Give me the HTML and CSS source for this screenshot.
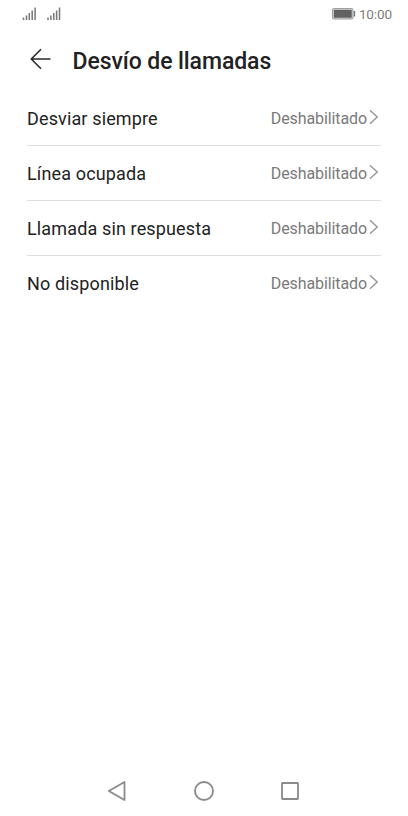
FILE: index.html
```html
<!DOCTYPE html>
<html lang="es">
<head>
<meta charset="utf-8">
<title>Desvío de llamadas</title>
<link rel="stylesheet" href="styles.css">
</head>
<body>
<div class="screen">
  <div class="status">
    <svg class="signals" width="40" height="14" viewBox="0 0 40 14"><path d="M1.500 10.500v2.500M4.500 8.500v4.500M7.300 6v7M10.200 3.500v9.500M13.100 .5v12.500M26 10.500v2.500M28.900 8.500v4.500M31.800 6v7M34.600 3.500v9.500M37.500 .5v12.500"/></svg>
    <div class="right">
      <svg width="24" height="12" viewBox="0 0 24 12"><rect x=".6" y=".6" width="20.300" height="10.300" rx="1.500" fill="#fff" stroke="#a0a0a0" stroke-width="1.200"/><rect x="1.700" y="1.700" width="18.100" height="8.100" fill="#626262"/><path d="M22.400 3v5.500" stroke="#777" stroke-width="1.500"/></svg>
      <span class="time">10:00</span>
    </div>
  </div>
  <header class="header">
    <svg width="22" height="22" viewBox="0 0 22 22"><path d="M20.500 11H1.500M11 1.300L1.300 11l9.700 9.700" fill="none" stroke="#2a2a2a" stroke-width="1.600"/></svg>
    <h1>Desvío de llamadas</h1>
  </header>
  <main class="list">
    <div class="row"><span class="label">Desviar siempre</span><span class="value">Deshabilitado</span><svg class="chevron" viewBox="0 0 10 16"><path d="M1 1.200L8.200 8 1 14.800"/></svg></div>
    <div class="row"><span class="label">Línea ocupada</span><span class="value">Deshabilitado</span><svg class="chevron" viewBox="0 0 10 16"><path d="M1 1.200L8.200 8 1 14.800"/></svg></div>
    <div class="row"><span class="label">Llamada sin respuesta</span><span class="value">Deshabilitado</span><svg class="chevron" viewBox="0 0 10 16"><path d="M1 1.200L8.200 8 1 14.800"/></svg></div>
    <div class="row"><span class="label">No disponible</span><span class="value">Deshabilitado</span><svg class="chevron" viewBox="0 0 10 16"><path d="M1 1.200L8.200 8 1 14.800"/></svg></div>
  </main>
  <nav class="nav">
    <svg width="22" height="22" viewBox="0 0 22 22"><path d="M17.500 2v18L1.800 11z" stroke-linejoin="round"/></svg>
    <svg width="22" height="22" viewBox="0 0 22 22"><circle cx="11" cy="11" r="9"/></svg>
    <svg width="22" height="22" viewBox="0 0 22 22"><rect x="3" y="3" width="16" height="16" rx=".5"/></svg>
  </nav>
</div>
</body>
</html>
```
FILE: styles.css
```css
* { box-sizing: border-box; }
body { margin: 0; background: #fff; font-family: Roboto, sans-serif; color: #222; }
.screen { width: 408px; height: 816px; display: flex; flex-direction: column; overflow: hidden; }
.status { height: 28px; display: flex; justify-content: space-between; align-items: center; padding: 0 16px 0 22px; }
.signals { fill: none; stroke: #777; stroke-width: 1.5; }
.right { display: flex; align-items: center; gap: 3px; }
.time { font-size: 13.5px; line-height: 20px; color: #7c7c7c; letter-spacing: -0.1px; }
.header { height: 62px; display: flex; align-items: center; gap: 20.5px; padding: 0 30px; }
.header h1 { margin: 5px 0 0; font-size: 23px; line-height: 30px; font-weight: 500; letter-spacing: -0.08px; }
.list { padding: 1px 27px 0; flex: 1; }
.row { height: 55px; display: flex; align-items: center; border-bottom: 1px solid #dedede; }
.row:last-child { border-bottom-color: transparent; }
.label { flex: 1; font-size: 18px; letter-spacing: 0.14px; }
.value { font-size: 16px; color: #7a7a7a; letter-spacing: -0.1px; }
.chevron { width: 10px; height: 16px; margin: -2px 2px 0; fill: none; stroke: #999; stroke-width: 1.5; }
.nav { height: 50px; display: flex; justify-content: center; gap: 64px; align-items: center; fill: none; stroke: #8a8a8a; stroke-width: 1.8; }
```
